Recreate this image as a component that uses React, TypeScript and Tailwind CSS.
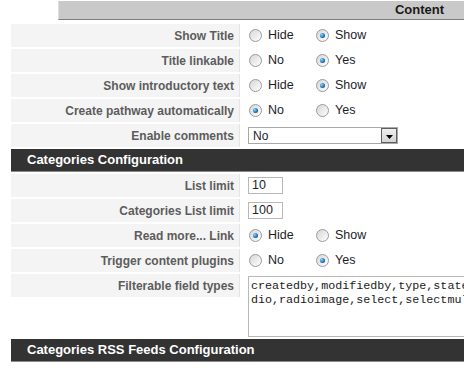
import React from "react";

const Radio = ({ checked }: { checked?: boolean }) => (
  <span className="relative inline-block w-[13px] h-[13px] rounded-full border border-[#9a9a9a] bg-gradient-to-br from-[#d6d6d6] to-[#ffffff] shrink-0">
    {checked && (
      <span className="absolute left-[3px] top-[3px] w-[5px] h-[5px] rounded-full bg-[radial-gradient(circle_at_35%_35%,#8fd4ff,#1a6db0_60%,#0d3f6e)]" />
    )}
  </span>
);

const RadioGroup = ({ options, value }: { options: string[]; value: string }) => (
  <div className="flex items-center pl-[9px]">
    {options.map((o) => (
      <div key={o} className="flex items-center w-[67px] gap-[6px]">
        <Radio checked={o === value} />
        <span className="text-[12.5px] text-[#1e1e28]">{o}</span>
      </div>
    ))}
  </div>
);

const Row = ({ label, children, tall }: { label: string; children: React.ReactNode; tall?: boolean }) => (
  <div className={`flex mb-[2px] ${tall ? "items-start" : "items-stretch"}`}>
    <div className="w-[229px] h-[23px] shrink-0 bg-[#f4f4f4] border-r border-[#e4e4e4] flex items-center justify-end pr-[5px] text-[12px] font-bold text-[#5c5c5c]">
      {label}
    </div>
    <div className={`flex-1 ${tall ? "" : "flex items-center"}`}>{children}</div>
  </div>
);

const SectionHeader = ({ title }: { title: string }) => (
  <div className="h-[23px] bg-[#333333] border-b border-[#8a8a8a] flex items-center pl-[16px] text-[13px] font-bold text-white">
    {title}
  </div>
);

const TextBox = ({ value }: { value: string }) => (
  <div className="ml-[8px] w-[35px] h-[17px] border border-[#b8b8b8] bg-white flex items-center pl-[3px] text-[12.5px] text-[#1e1e28]">
    {value}
  </div>
);

export default function App() {
  return (
    <div className="w-[464px] h-[368px] overflow-hidden bg-white" style={{ fontFamily: '"Liberation Sans", Arial, sans-serif' }}>
      <div className="ml-[58px] mt-[1px] h-[19px] bg-[#c9c9c9] border-b border-[#7d7d7d] border-l border-l-[#dedede] flex items-center justify-end pr-[20px] text-[13px] font-bold text-[#1a1a1a]">
        Content
      </div>
      <div className="pl-[11px] pt-[4px]">
        <Row label="Show Title">
          <RadioGroup options={["Hide", "Show"]} value="Show" />
        </Row>
        <Row label="Title linkable">
          <RadioGroup options={["No", "Yes"]} value="Yes" />
        </Row>
        <Row label="Show introductory text">
          <RadioGroup options={["Hide", "Show"]} value="Show" />
        </Row>
        <Row label="Create pathway automatically">
          <RadioGroup options={["No", "Yes"]} value="No" />
        </Row>
        <Row label="Enable comments">
          <div className="ml-[8px] w-[150px] h-[17px] border border-[#a8a8a8] bg-white flex items-center justify-between">
            <span className="pl-[4px] text-[12px] text-[#1e1e28]">No</span>
            <span className="w-[16px] h-[15px] border border-[#5e5e5e] bg-gradient-to-b from-[#efefef] to-[#d4d4d4] flex items-end justify-center pb-[3px]">
              <svg width="7" height="4" viewBox="0 0 7 4">
                <path d="M0 0h7L3.5 4z" fill="#000" />
              </svg>
            </span>
          </div>
        </Row>
        <div className="mt-[2px]">
          <SectionHeader title="Categories Configuration" />
        </div>
        <div className="pt-[2px]">
          <Row label="List limit">
            <TextBox value="10" />
          </Row>
          <Row label="Categories List limit">
            <TextBox value="100" />
          </Row>
          <Row label="Read more... Link">
            <RadioGroup options={["Hide", "Show"]} value="Hide" />
          </Row>
          <Row label="Trigger content plugins">
            <RadioGroup options={["No", "Yes"]} value="Yes" />
          </Row>
          <Row label="Filterable field types" tall>
            <div className="ml-[8px] mt-[2px] w-[260px] h-[61px] border border-[#b8b8b8] bg-white pl-[2px] pt-[2px] overflow-hidden text-[11.7px] leading-[14px] text-[#1a1a1a] whitespace-nowrap" style={{ fontFamily: '"Liberation Mono", "Courier New", monospace' }}>
              <div>createdby,modifiedby,type,state,text,textarea,ra</div>
              <div>dio,radioimage,select,selectmultiple</div>
            </div>
          </Row>
        </div>
        <div className="mt-[1px]">
          <SectionHeader title="Categories RSS Feeds Configuration" />
        </div>
      </div>
    </div>
  );
}
